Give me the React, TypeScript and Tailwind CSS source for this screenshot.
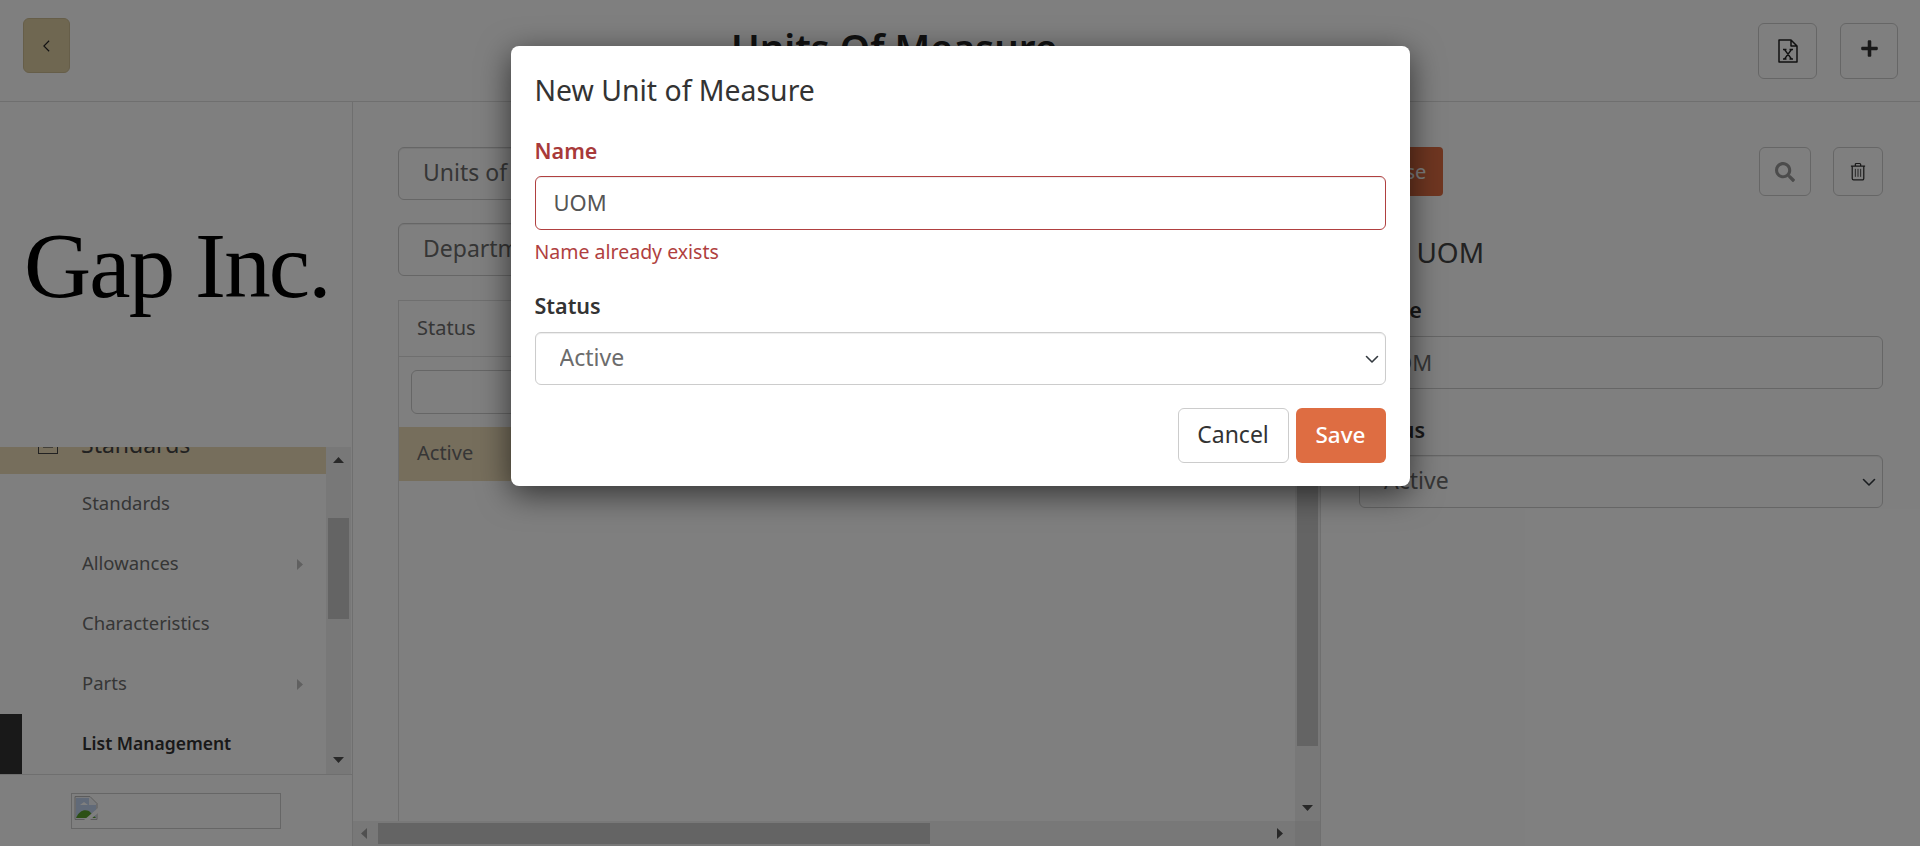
import React from "react";
import { FaPlus, FaSearch } from "react-icons/fa";

const Tri = ({ dir, className }: { dir: "up" | "down" | "left" | "right"; className?: string }) => {
  const pts = {
    up: "0,6 5.5,0 11,6",
    down: "0,0 11,0 5.5,6",
    left: "6,0 6,11 0,5.5",
    right: "0,0 6,5.5 0,11",
  }[dir];
  const box = dir === "up" || dir === "down" ? "0 0 11 6" : "0 0 6 11";
  const size = dir === "up" || dir === "down" ? { w: 11, h: 6 } : { w: 6, h: 11 };
  return (
    <svg viewBox={box} width={size.w} height={size.h} className={className}>
      <polygon points={pts} fill="currentColor" />
    </svg>
  );
};

const Chevron = () => (
  <svg viewBox="0 0 16 16" width="16" height="16" className="absolute right-[6px] top-1/2 -translate-y-1/2 text-[#343a40]">
    <path d="M2.5 5.5 8 11l5.5-5.5" fill="none" stroke="currentColor" strokeWidth="1.6" strokeLinecap="round" strokeLinejoin="round" />
  </svg>
);

const SideItem = ({ label, arrow, active }: { label: string; arrow?: boolean; active?: boolean }) => (
  <div className={`h-[60px] flex items-center pr-[23px] ${active ? "font-semibold text-[#333] border-l-[22px] border-[#333] pl-[60px]" : "pl-[82px] text-[#6c6c6c]"}`}>
    <span className={`flex-1 pb-[2px] ${active ? "text-[17.5px]" : "text-[18.5px]"}`}>{label}</span>
    {arrow && <Tri dir="right" className="text-[#c0c0c0]" />}
  </div>
);

const SelectBox = ({ value, className }: { value: string; className: string }) => (
  <div className={`relative ${className}`}>
    <select defaultValue={value} className="appearance-none w-full h-full bg-white border border-[#ccc] rounded-[6px] pl-[24px] pb-[2px] text-[23px] text-[#6c6c6c] outline-none shadow-[inset_0_1px_1px_rgba(0,0,0,0.075)]">
      <option>{value}</option>
    </select>
    <Chevron />
  </div>
);

export default function App() {
  return (
    <div className="relative h-[846px] w-[1920px] overflow-hidden bg-white font-['Noto_Sans',sans-serif] text-[#444]">
      {/* header */}
      <div className="h-[102px] border-b border-[#dedede] flex items-start">
        <button className="ml-[23px] mt-[18px] w-[47px] h-[55px] bg-[#dfcfa3] border border-[#cdbd92] rounded-[6px] flex items-center justify-center">
          <svg viewBox="0 0 10 16" width="9" height="14" className="text-[#222]">
            <path d="M8 2 2 8l6 6" fill="none" stroke="currentColor" strokeWidth="1.3" />
          </svg>
        </button>
        <h1 className="ml-[661px] mt-[20px] text-[38.5px] leading-[54px] font-semibold text-[#222]">Units Of Measure</h1>
        <div className="ml-auto mt-[23px] mr-[22px] flex gap-[23px]">
          <button className="w-[59px] h-[56px] border border-[#ccc] rounded-[6px] flex items-center justify-center">
            <svg viewBox="0 0 20 24" width="20" height="24" className="text-[#222]">
              <path d="M1 1h12l6 6v16H1z M13 1v6h6" fill="none" stroke="currentColor" strokeWidth="1.5" strokeLinejoin="round" />
              <path d="M5 10.5h3.5M11.5 10.5H15M5 20h3.5M11.5 20H15M6.5 10.5l7 9.5M13.5 10.5l-7 9.5" fill="none" stroke="currentColor" strokeWidth="1.3" />
            </svg>
          </button>
          <button className="w-[58px] h-[56px] border border-[#ccc] rounded-[6px] flex items-center justify-center">
            <FaPlus className="text-[#333] -mt-[6px]" size={19} />
          </button>
        </div>
      </div>

      <div className="flex h-[744px]">
        {/* sidebar */}
        <aside className="w-[353px] shrink-0 border-r border-[#dedede] flex flex-col">
          <div className="h-[345px] pl-[24px] pt-[116px]">
            <div className="font-['Liberation_Serif',serif] text-[93px] leading-[96px] tracking-[-1.8px] text-black">Gap Inc.</div>
          </div>
          <div className="h-[327px] flex overflow-hidden">
            <div className="w-[326px]">
              <div className="-mt-[33px] h-[60px] bg-[#ecdcb9] flex items-center pl-[38px] pr-[23px] text-[#444]">
                <svg viewBox="0 0 20 20" width="20" height="20" className="text-[#444]">
                  <rect x="0.5" y="0.5" width="19" height="19" fill="none" stroke="currentColor" />
                  <path d="M5 13h10" stroke="currentColor" strokeWidth="1.2" />
                </svg>
                <span className="ml-[23px] text-[23px]">Standards</span>
              </div>
              <SideItem label="Standards" />
              <SideItem label="Allowances" arrow />
              <SideItem label="Characteristics" />
              <SideItem label="Parts" arrow />
              <SideItem label="List Management" active />
            </div>
            <div className="w-[25px] bg-[#f1f1f1] flex flex-col items-center relative">
              <Tri dir="up" className="mt-[10px] text-[#505050]" />
              <div className="mt-[55px] w-[21px] h-[101px] bg-[#c8c8c8]" />
              <Tri dir="down" className="mt-auto mb-[11px] text-[#505050]" />
            </div>
          </div>
          <div className="flex-1 border-t border-[#dedede] pl-[71px] pt-[18px]">
            <div className="w-[210px] h-[36px] border border-[#ccc] p-[2px]">
              <svg viewBox="0 0 24 24" width="24" height="24">
                <path d="M1 0.5h15l7 7v16H1z" fill="#f4f6fa" stroke="#b8b8b8" />
                <path d="M2 2h13v7h7v13H2z" fill="#c3d4f0" />
                <path d="M2 22c3-7 8-9 13-7l7 7z" fill="#5aa02c" />
                <path d="M6 9l4-3 4 3z" fill="#fff" />
                <path d="M10 24 24 12v5l-8 7z" fill="#fff" />
              </svg>
            </div>
          </div>
        </aside>

        {/* main */}
        <main className="w-[967px] shrink-0 flex flex-col">
          <div className="h-[719px] flex">
            <div className="flex-1 pl-[45px] pt-[45px] min-w-0">
              <div className="w-[560px]">
                <SelectBox value="Units of Measure" className="h-[53px]" />
                <SelectBox value="Department" className="h-[53px] mt-[23px]" />
              </div>
              <div className="mt-[24px] h-[521px] border-l border-t border-[#dedede]">
                <div className="h-[56px] border-b border-[#dedede] flex items-center pl-[18px] pb-[2px] text-[#6c6c6c] text-[20px]">Status</div>
                <div className="h-[70px] pl-[12px] pt-[13px]">
                  <input className="w-[300px] h-[44px] bg-white border border-[#ccc] rounded-[6px]" />
                </div>
                <div className="h-[54px] bg-[#ecdcb9] flex items-center pl-[18px] pb-[2px] text-[#6c6c6c] text-[20px]">Active</div>
              </div>
            </div>
            <div className="w-[25px] bg-[#f1f1f1] flex flex-col items-center">
              <div className="mt-[60px] w-[21px] h-[584px] bg-[#c8c8c8]" />
              <Tri dir="down" className="mt-auto mb-[10px] text-[#505050]" />
            </div>
          </div>
          <div className="h-[25px] flex">
            <div className="flex-1 bg-[#f1f1f1] flex items-center pl-[8px] pr-[12px]">
              <Tri dir="left" className="text-[#a0a0a0]" />
              <div className="ml-[11px] w-[552px] h-[21px] bg-[#c8c8c8]" />
              <Tri dir="right" className="ml-auto text-[#505050]" />
            </div>
            <div className="w-[25px] bg-[#e6e6e6]" />
          </div>
        </main>

        {/* right panel */}
        <section className="flex-1 border-l border-[#dedede] pl-[38px] pr-[37px] pt-[45px] min-w-0">
          <div className="flex items-start">
            <button className="w-[84px] h-[49px] bg-[#de6d42] rounded-[4px] text-white text-[20px]">Close</button>
            <button className="ml-auto w-[52px] h-[49px] border border-[#ccc] rounded-[6px] flex items-center justify-center">
              <FaSearch className="text-[#999]" size={20} />
            </button>
            <button className="ml-[22px] w-[50px] h-[49px] border border-[#ccc] rounded-[6px] flex items-center justify-center">
              <svg viewBox="0 0 18 20" width="16" height="19" className="text-[#333]">
                <path d="M1 4h16M6 4V2a1 1 0 0 1 1-1h4a1 1 0 0 1 1 1v2M2.5 4v14a1.5 1.5 0 0 0 1.5 1.5h10a1.5 1.5 0 0 0 1.5-1.5V4" fill="none" stroke="currentColor" strokeWidth="1.4" />
                <path d="M6 7v9M9 7v9M12 7v9" stroke="currentColor" strokeWidth="1" />
              </svg>
            </button>
          </div>
          <h2 className="mt-[36px] text-[28px] leading-[40px] text-[#444]">Edit UOM</h2>
          <label className="block mt-[24px] text-[21.5px] leading-[28px] font-semibold text-[#333]">Name</label>
          <input defaultValue="UOM" className="mt-[12px] w-full h-[53px] bg-white border border-[#ccc] rounded-[6px] pl-[19px] pb-[2px] text-[22px] text-[#6c6c6c] outline-none" />
          <label className="block mt-[27px] text-[21.5px] leading-[28px] font-semibold text-[#333]">Status</label>
          <SelectBox value="Active" className="h-[53px] mt-[11px]" />
        </section>
      </div>

      {/* modal */}
      <div className="absolute inset-0 bg-black/50 flex justify-center items-start pt-[46px]">
        <div className="w-[899px] h-[440px] bg-white rounded-[8px] shadow-[0_8px_32px_rgba(0,0,0,0.6)] px-[24px] pt-[24px]">
          <h3 className="text-[28.4px] leading-[40px] text-[#333]">New Unit of Measure</h3>
          <label className="block mt-[27px] text-[21.5px] leading-[28px] font-semibold text-[#a83a3a]">Name</label>
          <input defaultValue="UOM" className="mt-[11px] block w-full h-[54px] border border-[#b04040] rounded-[6px] pl-[18px] pb-[2px] text-[22px] text-[#555] outline-none shadow-[inset_0_1px_1px_rgba(0,0,0,0.075)]" />
          <p className="mt-[9px] text-[19.5px] leading-[26px] text-[#b04040]">Name already exists</p>
          <label className="block mt-[27px] text-[21.5px] leading-[28px] font-semibold text-[#333]">Status</label>
          <SelectBox value="Active" className="h-[53px] mt-[12px]" />
          <div className="flex justify-end gap-[7px] mt-[23px]">
            <button className="w-[111px] h-[55px] pb-[2px] border border-[#ccc] rounded-[6px] text-[23px] text-[#333] bg-white">Cancel</button>
            <button className="w-[90px] h-[55px] pb-[2px] rounded-[6px] text-[22.5px] font-medium text-white bg-[#de6d42]">Save</button>
          </div>
        </div>
      </div>
    </div>
  );
}
